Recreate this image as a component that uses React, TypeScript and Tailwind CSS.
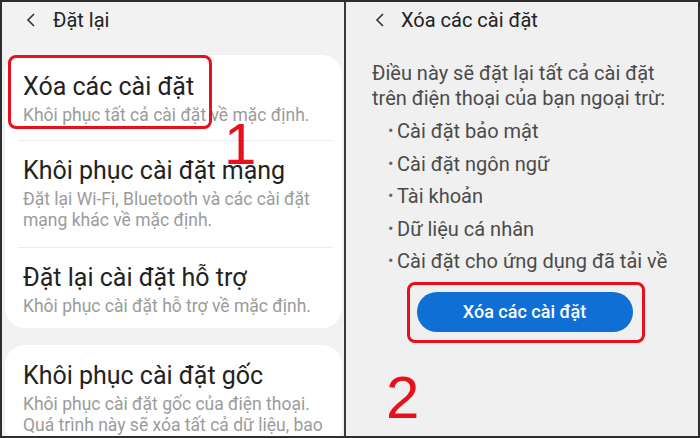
import { ReactNode } from "react";

function Chevron() {
  return (
    <svg width="10" height="14" viewBox="0 0 10 14" fill="none" stroke="#333" strokeWidth="1.6">
      <path d="M8 1 L2 7 L8 13" />
    </svg>
  );
}

function Item(props: { title: string; children: ReactNode; pt: string; pb: string; last?: boolean }) {
  return (
    <div>
      <div className={`pl-[18px] pr-[6px] ${props.pt} ${props.pb}`}>
        <div className="text-[25px] leading-[28px] text-[#222]">{props.title}</div>
        <div className="mt-[4px] whitespace-nowrap text-[17.5px] leading-[21px] text-[#9b9b9b]">{props.children}</div>
      </div>
      {!props.last && <div className="ml-[13px] mr-[9px] h-px bg-[#ececec]" />}
    </div>
  );
}

const bullets = [
  "Cài đặt bảo mật",
  "Cài đặt ngôn ngữ",
  "Tài khoản",
  "Dữ liệu cá nhân",
  "Cài đặt cho ứng dụng đã tải về",
];

export default function App() {
  return (
    <div className="flex h-[438px] w-[700px] overflow-hidden border-2 border-[#2e2e2e] font-['Roboto',sans-serif]">
      {/* left screen */}
      <div className="relative w-[344px] shrink-0 overflow-hidden border-r-2 border-[#3a3a3a] bg-[#f2f2f2] pl-[3px] pr-[2px]">
        <div className="flex h-[53px] items-start pl-[21px] pt-[6px]">
          <div className="flex h-[24px] items-center">
            <Chevron />
          </div>
          <span className="ml-[17px] text-[20px] leading-[24px] text-[#222]">Đặt lại</span>
        </div>

        <div className="relative rounded-[20px] bg-white">
          <Item title="Xóa các cài đặt" pt="pt-[18px]" pb="pb-[14px]">
            Khôi phục tất cả cài đặt về mặc định.
          </Item>
          <Item title="Khôi phục cài đặt mạng" pt="pt-[16px]" pb="pb-[16px]">
            Đặt lại Wi-Fi, Bluetooth và các cài đặt
            <br />
            mạng khác về mặc định.
          </Item>
          <Item title="Đặt lại cài đặt hỗ trợ" pt="pt-[16px]" pb="pb-[11px]" last>
            Khôi phục cài đặt hỗ trợ về mặc định.
          </Item>
          <div className="absolute left-[3px] top-0 h-[74px] w-[204px] rounded-[8px] border-[3px] border-[#e8101a]" />
        </div>

        <div className="mt-[17px] rounded-[20px] bg-white">
          <Item title="Khôi phục cài đặt gốc" pt="pt-[17px]" pb="pb-[10px]" last>
            Khôi phục cài đặt gốc của điện thoại.
            <br />
            Quá trình này sẽ xóa tất cả dữ liệu, bao
          </Item>
        </div>

        <span className="absolute left-[222px] top-[113px] font-['Liberation_Sans',sans-serif] text-[58px] leading-none text-[#e8101a]">
          1
        </span>
      </div>

      {/* right screen */}
      <div className="flex flex-1 flex-col bg-[#f0f0f0]">
        <div className="flex h-[59px] shrink-0 items-start pl-[29px] pt-[6px]">
          <div className="flex h-[24px] items-center">
            <Chevron />
          </div>
          <span className="ml-[16px] text-[20px] leading-[24px] text-[#222]">Xóa các cài đặt</span>
        </div>

        <div className="pl-[26px] text-[20px] leading-[25px] text-[#4b4b4b]">
          Điều này sẽ đặt lại tất cả cài đặt
          <br />
          trên điện thoại của bạn ngoại trừ:
        </div>

        <ul className="mt-[4px] pl-[42px] text-[20px] leading-[32.5px] text-[#4b4b4b]">
          {bullets.map((b) => (
            <li key={b} className="flex">
              <span className="w-[9px] text-[16px] text-[#666]">•</span>
              <span>{b}</span>
            </li>
          ))}
        </ul>

        <div className="mt-[4px] flex justify-center pl-[7px]">
          <div className="rounded-[8px] border-[3px] border-[#e8101a] pb-[8px] pl-[7px] pr-[9px] pt-[7px]">
            <button className="h-[40px] w-[216px] rounded-full bg-[#0f6fd4] text-[18px] font-medium text-white">
              Xóa các cài đặt
            </button>
          </div>
        </div>

        <div className="mt-[25px] pl-[40px] font-['Liberation_Sans',sans-serif] text-[60px] leading-none text-[#e8101a]">
          2
        </div>
      </div>
    </div>
  );
}
